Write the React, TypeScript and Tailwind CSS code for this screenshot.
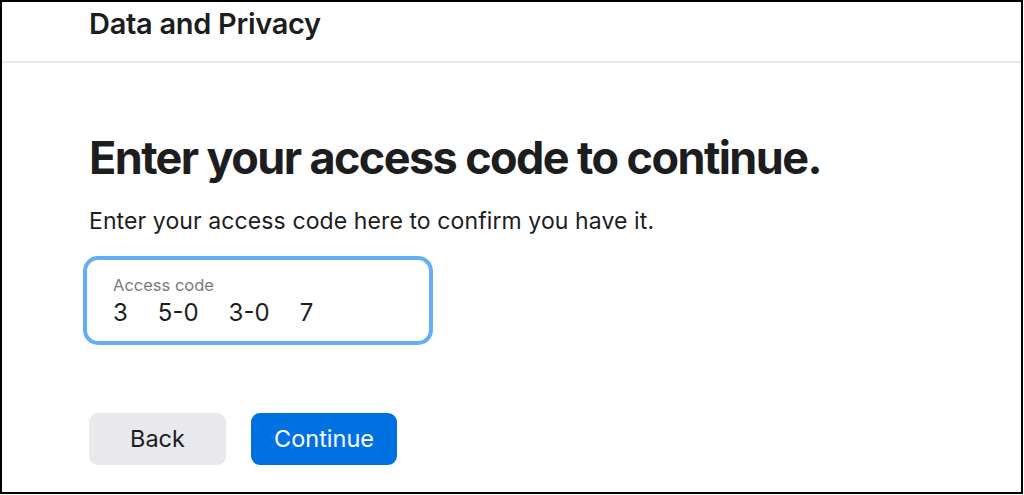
import React from "react";

const font = { fontFamily: "Inter, 'Noto Sans', sans-serif" };

export default function App() {
  return (
    <div
      className="w-[1023px] h-[494px] border-2 border-black bg-white text-[#1d1d1f] flex flex-col overflow-hidden"
      style={font}
    >
      {/* Header */}
      <div className="h-[61px] shrink-0 border-b-2 border-[#e8e8e8] pl-[87px] pt-[4px]">
        <h1 className="text-[29px] font-semibold leading-[36px] tracking-[-0.3px]">Data and Privacy</h1>
      </div>

      {/* Body */}
      <div className="pl-[87px] pt-[67px] flex flex-col">
        <h2 className="text-[45px] font-bold leading-[56px] tracking-[-1.6px]">
          Enter your access code to continue.
        </h2>
        <p className="mt-[21px] text-[23px] leading-[28px] tracking-[0.1px]">
          Enter your access code here to confirm you have it.
        </p>

        <div className="mt-[21px] -ml-[6px] w-[350px] h-[89px] rounded-[15px] border-[4px] border-[#63adfb] pl-[26px] pt-[15px]">
          <div className="text-[16.5px] leading-[20px] text-[#7a7a7a]">Access code</div>
          <div className="mt-[4px] flex gap-[30px] text-[24px] leading-[28px] text-[#1d1d1f]">
            <span>3</span>
            <span>5-0</span>
            <span>3-0</span>
            <span>7</span>
          </div>
        </div>

        <div className="mt-[68px] flex gap-[25px]">
          <button className="w-[137px] h-[52px] rounded-[9px] bg-[#e8e8ed] text-[23.5px] text-[#1d1d1f]">
            Back
          </button>
          <button className="w-[146px] h-[52px] rounded-[9px] bg-[#0071e3] text-[23.5px] text-white">
            Continue
          </button>
        </div>
      </div>
    </div>
  );
}
